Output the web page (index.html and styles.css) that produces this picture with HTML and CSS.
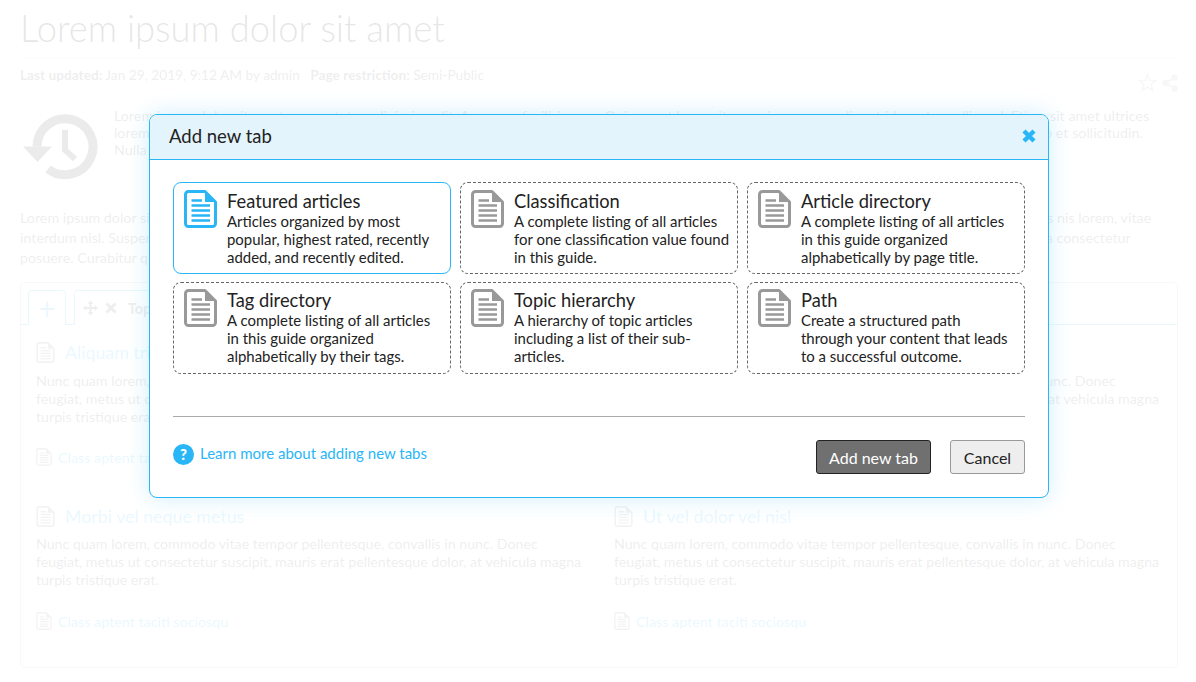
FILE: index.html
```html
<!DOCTYPE html>
<html lang="en">
<head>
<meta charset="utf-8">
<title>Add new tab</title>
<link rel="stylesheet" href="styles.css">
</head>
<body>
<svg class="defs" width="0" height="0" aria-hidden="true">
  <symbol id="doc" viewBox="0 0 33 38">
    <path d="M4 1.5H21L31.5 12V33.5a3 3 0 0 1-3 3H4.500a3 3 0 0 1-3-3V4.500a3 3 0 0 1 3-3Z" fill="none" stroke="currentColor" stroke-width="3" stroke-linejoin="round"/>
    <path d="M21 1.500V12H31.500Z" fill="currentColor"/>
    <path d="M7.500 10.500H18M7.500 15.500H26M7.500 20.500H26M7.500 25.500H26M7.500 30.500H26" stroke="currentColor" stroke-width="2.500"/>
  </symbol>
</svg>

<main class="page">
  <h1 class="page-title">Lorem ipsum dolor sit amet</h1>
  <div class="meta-row">
    <p class="meta"><b>Last updated:</b> Jan 29, 2019, 9:12 AM by admin <span class="meta-gap"><b>Page restriction:</b> Semi-Public</span></p>
    <div class="page-actions">
      <svg class="star" viewBox="0 0 20 20"><path d="M10 1.800 12.300 7.700 18.800 8 13.700 12 15.500 18.300 10 14.800 4.500 18.300 6.300 12 1.200 8 7.700 7.700Z" fill="none" stroke="currentColor" stroke-width="1.500"/></svg>
      <svg class="share" viewBox="0 0 16 18"><path d="M12.500 3.500 3.500 9 12.500 14.500" fill="none" stroke="currentColor" stroke-width="2"/><circle cx="12.500" cy="3.500" r="3.200" fill="currentColor"/><circle cx="3.500" cy="9" r="3.200" fill="currentColor"/><circle cx="12.500" cy="14.500" r="3.200" fill="currentColor"/></svg>
    </div>
  </div>

  <section class="intro">
    <svg class="history" viewBox="0 0 76 68"><path d="M15 34.500A28 28 0 1 1 26 57" fill="none" stroke="currentColor" stroke-width="9"/><path d="M1 34.500H30L15.500 50Z" fill="currentColor"/><path d="M43 18V38L53 47" fill="none" stroke="currentColor" stroke-width="6"/></svg>
    <p class="intro-text">Lorem ipsum dolor sit amet, consectetur adipiscing elit. Aenean a facilisis arcu. Quisque at lacus vitae sapien congue aliquet id a ante mollis sed. Etiam sit amet ultrices<br>lorem, at tincidunt nunc. Praesent vel mauris sed lectus feugiat tempor nec vitae augue. Vivamus pretium mi vitae nisi rhoncus, vitae ante sit commodo et sollicitudin.<br>Nulla facilisi.</p>
  </section>

  <p class="lead">Lorem ipsum dolor sit amet, consectetur adipiscing elit. Sed pharetra, mauris vel fermentum dictum, justo libero tempus nunc, quis volutpat turpis nisl in felis. Vivamus nis lorem, vitae<br>interdum nisl. Suspendisse potenti. Praesent sagittis, nibh vel varius efficitur, lectus urna dictum sapien, nec vulputate risus nunc ut erat. Maecenas ligula nunc purus a consectetur<br>posuere. Curabitur quis ante at elit tincidunt gravida.</p>

  <section class="tabs-box">
    <div class="tab-bar">
      <div class="tab tab-add">+</div>
      <div class="tab tab-topic">
        <svg class="move" viewBox="0 0 16 16"><path d="M8 0 11 3.500H9V7H12.500V5L16 8 12.500 11V9H9V12.500H11L8 16 5 12.500H7V9H3.500V11L0 8 3.500 5V7H7V3.500H5Z" fill="currentColor"/></svg>
        <svg class="tab-x" viewBox="0 0 12 12"><path d="M1.500 1.500 10.500 10.500M10.500 1.500 1.500 10.500" stroke="currentColor" stroke-width="3"/></svg>
        <b>Top articles tab</b>
      </div>
    </div>
    <div class="tab-panel">
      <article class="item">
        <h2 class="item-title"><svg class="item-icon"><use href="#doc"/></svg>Aliquam tristique</h2>
        <p class="item-text">Nunc quam lorem, commodo vitae tempor pellentesque, convallis in nunc. Donec feugiat, metus ut consectetur suscipit, mauris erat pellentesque dolor, at vehicula magna turpis tristique erat.</p>
        <a class="item-link"><svg class="link-icon"><use href="#doc"/></svg>Class aptent taciti sociosqu</a>
      </article>
      <article class="item">
        <h2 class="item-title"><svg class="item-icon"><use href="#doc"/></svg>Sed vitae lacus</h2>
        <p class="item-text">Nunc quam lorem, commodo vitae tempor pellentesque, convallis in nunc. Donec feugiat, metus ut consectetur suscipit, mauris erat pellentesque dolor, at vehicula magna turpis tristique erat.</p>
        <a class="item-link"><svg class="link-icon"><use href="#doc"/></svg>Class aptent taciti sociosqu</a>
      </article>
      <article class="item">
        <h2 class="item-title"><svg class="item-icon"><use href="#doc"/></svg>Morbi vel neque metus</h2>
        <p class="item-text">Nunc quam lorem, commodo vitae tempor pellentesque, convallis in nunc. Donec feugiat, metus ut consectetur suscipit, mauris erat pellentesque dolor, at vehicula magna turpis tristique erat.</p>
        <a class="item-link"><svg class="link-icon"><use href="#doc"/></svg>Class aptent taciti sociosqu</a>
      </article>
      <article class="item">
        <h2 class="item-title"><svg class="item-icon"><use href="#doc"/></svg>Ut vel dolor vel nisl</h2>
        <p class="item-text">Nunc quam lorem, commodo vitae tempor pellentesque, convallis in nunc. Donec feugiat, metus ut consectetur suscipit, mauris erat pellentesque dolor, at vehicula magna turpis tristique erat.</p>
        <a class="item-link"><svg class="link-icon"><use href="#doc"/></svg>Class aptent taciti sociosqu</a>
      </article>
    </div>
  </section>
</main>

<div class="scrim"></div>

<div class="modal" role="dialog" aria-label="Add new tab">
  <header class="modal-head">
    <h2 class="modal-title">Add new tab</h2>
    <svg class="modal-close" viewBox="0 0 14 14"><path d="M2 2 12 12M12 2 2 12" stroke="currentColor" stroke-width="4.400"/></svg>
  </header>
  <div class="modal-body">
    <div class="cards">
      <div class="card card-active">
        <svg class="card-icon"><use href="#doc"/></svg>
        <div class="card-copy"><h3 class="card-title">Featured articles</h3><p class="card-desc">Articles organized by most popular, highest rated, recently added, and recently edited.</p></div>
      </div>
      <div class="card">
        <svg class="card-icon"><use href="#doc"/></svg>
        <div class="card-copy"><h3 class="card-title">Classification</h3><p class="card-desc">A complete listing of all articles for one classification value found in this guide.</p></div>
      </div>
      <div class="card">
        <svg class="card-icon"><use href="#doc"/></svg>
        <div class="card-copy"><h3 class="card-title">Article directory</h3><p class="card-desc">A complete listing of all articles in this guide organized alphabetically by page title.</p></div>
      </div>
      <div class="card">
        <svg class="card-icon"><use href="#doc"/></svg>
        <div class="card-copy"><h3 class="card-title">Tag directory</h3><p class="card-desc">A complete listing of all articles in this guide organized alphabetically by their tags.</p></div>
      </div>
      <div class="card">
        <svg class="card-icon"><use href="#doc"/></svg>
        <div class="card-copy"><h3 class="card-title">Topic hierarchy</h3><p class="card-desc">A hierarchy of topic articles including a list of their sub-articles.</p></div>
      </div>
      <div class="card">
        <svg class="card-icon"><use href="#doc"/></svg>
        <div class="card-copy"><h3 class="card-title">Path</h3><p class="card-desc">Create a structured path<br>through your content that leads to a successful outcome.</p></div>
      </div>
    </div>
    <footer class="modal-foot">
      <a class="help"><span class="help-badge">?</span>Learn more about adding new tabs</a>
      <div class="actions">
        <button class="btn btn-primary" type="button">Add new tab</button>
        <button class="btn btn-cancel" type="button">Cancel</button>
      </div>
    </footer>
  </div>
</div>
</body>
</html>
```

FILE: styles.css
```css
* { box-sizing: border-box; }
html, body { margin: 0; height: 682px; overflow: hidden; }
body { font-family: Lato, "Liberation Sans", sans-serif; font-size: 14.3px; color: #555; background: #fff; position: relative; }
.defs { position: absolute; }
h1, h2, h3, p { margin: 0; font-weight: normal; }

.page { padding: 0 18px 0 20px; height: 682px; overflow: hidden; }
.page-title { font-size: 36.4px; font-weight: 300; line-height: 57px; border-bottom: 1px solid #ddd; height: 59px; color: #000; }
.meta-row { display: flex; justify-content: space-between; height: 48px; }
.meta { margin-top: 7px; line-height: 18px; font-size: 13.7px; }
.meta-gap { margin-left: 7px; }
.page-actions { display: flex; gap: 5px; padding-top: 14px; color: #aaa; align-items: flex-start; }
.star { width: 19px; height: 19px; }
.share { width: 16px; height: 18px; margin-top: 1px; }

.intro { display: flex; height: 101px; }
.history { width: 76px; height: 68px; margin: 5px 16px 0 2px; color: #333; flex: none; }
.intro-text { line-height: 17px; white-space: nowrap; }
.lead { line-height: 20px; white-space: nowrap; height: 74px; }

.tabs-box { border: 1px solid #bbb; border-radius: 4px; height: 386px; }
.tab-bar { display: flex; gap: 8px; padding: 7px 0 0 7px; height: 42px; border-bottom: 1px solid #29b6f6; }
.tab { border: 1px solid #29b6f6; border-bottom: 0; border-radius: 4px 4px 0 0; height: 35px; display: flex; align-items: center; background: #fff; }
.tab-add { width: 38px; justify-content: center; color: #29b6f6; font-size: 30px; line-height: 1; }
.tab-topic { padding: 0 10px 0 8px; color: #555; width: 200px; white-space: nowrap; }
.move { width: 15px; height: 16px; margin-right: 7px; }
.tab-x { width: 12px; height: 12px; margin-right: 11px; }

.tab-panel { display: grid; grid-template-columns: 578px 530px; padding: 16px 0 0 15px; }
.item { height: 164px; }
.item-title { display: flex; align-items: center; color: #29b6f6; font-size: 17.8px; line-height: 22px; height: 22px; }
.item-icon { width: 19px; height: 21px; margin-right: 10px; color: #888; flex: none; }
.item-text { margin-top: 9px; line-height: 18px; width: 549px; font-size: 14.2px; }
.item-link { display: flex; align-items: center; margin-top: 22px; color: #29b6f6; height: 18px; }
.item:nth-child(n+3) .item-text { margin-top: 8px; }
.item:nth-child(n+3) .item-link { margin-top: 23px; }
.link-icon { width: 16px; height: 18px; margin-right: 6px; color: #888; flex: none; }

.scrim { position: absolute; inset: 0; background: rgba(255, 255, 255, .9); }

.modal { position: absolute; left: 149px; top: 114px; width: 900px; height: 384px; background: #fff; border: 1px solid #29b6f6; border-radius: 8px; box-shadow: 0 0 22px rgba(41, 182, 246, .22); overflow: hidden; }
.modal-head { display: flex; justify-content: space-between; align-items: center; height: 45px; padding: 0 12px 3px 19px; background: #e3f4fd; border-bottom: 1px solid #29b6f6; }
.modal-title { font-size: 18.5px; color: #222; }
.modal-close { width: 14px; height: 14px; color: #29b6f6; }
.modal-body { padding: 22px 23px 0; }
.cards { display: grid; grid-template-columns: repeat(3, 278px); grid-auto-rows: 92px; column-gap: 9px; row-gap: 8px; padding-bottom: 42px; border-bottom: 1px solid #aaa; }
.card { display: flex; border: 1px dashed #666; border-radius: 8px; padding: 7px 5px 0 10px; }
.card:nth-child(n+4) { padding-top: 6px; }
.card-active { border: 1px solid #29b6f6; }
.card-icon { width: 33px; height: 38px; flex: none; margin-right: 10px; color: #999; }
.card-active .card-icon { color: #29b6f6; }
.card-title { font-size: 18.3px; line-height: 22px; color: #222; }
.card-desc { font-size: 14.95px; line-height: 18px; color: #222; }
.modal-foot { display: flex; justify-content: space-between; padding-top: 23px; }
.help { display: flex; align-items: flex-start; gap: 6px; color: #29b6f6; font-size: 15px; line-height: 26px; }
.help-badge { width: 21px; height: 21px; border-radius: 50%; background: #29b6f6; color: #fff; font-weight: 900; font-size: 15px; line-height: 21px; text-align: center; margin-top: 4px; }
.actions { display: flex; gap: 19px; }
.btn { font: inherit; font-size: 16px; height: 34px; border-radius: 3px; padding: 0; }
.btn-primary { width: 115px; background: #707070; border: 1px solid #222; color: #fff; }
.btn-cancel { width: 75px; background: #eee; border: 1px solid #999; color: #222; }
```
